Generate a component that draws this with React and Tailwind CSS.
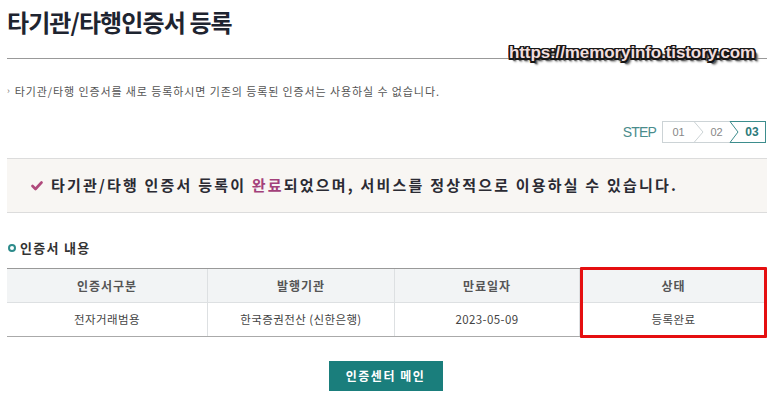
const KR = { fontFamily: '"Noto Sans CJK KR", "Liberation Sans", sans-serif' };

const StepBox = () => (
    <div className="flex items-center h-[22px] text-[11px]" style={{ fontFamily: '"Liberation Sans", sans-serif' }}>
        <div className="h-full w-[32px] flex items-center justify-center border-y border-l border-[#ccd3d6] text-[#888]">01</div>
        <svg width="10" height="22" viewBox="0 0 10 22" className="block">
            <line x1="0" y1="0.5" x2="10" y2="0.5" stroke="#ccd3d6" />
            <line x1="0" y1="21.5" x2="10" y2="21.5" stroke="#ccd3d6" />
            <polyline points="0,0.5 9,11 0,21.5" fill="none" stroke="#ccd3d6" />
        </svg>
        <div className="h-full w-[25px] flex items-center justify-center border-y border-[#ccd3d6] text-[#888]">02</div>
        <svg width="10" height="22" viewBox="0 0 10 22" className="block">
            <line x1="0" y1="0.5" x2="10" y2="0.5" stroke="#ccd3d6" />
            <line x1="0" y1="21.5" x2="10" y2="21.5" stroke="#ccd3d6" />
            <line x1="1" y1="0.5" x2="10" y2="0.5" stroke="#3d8d8d" />
            <line x1="1" y1="21.5" x2="10" y2="21.5" stroke="#3d8d8d" />
            <polyline points="1,0.5 9,11 1,21.5" fill="none" stroke="#3d8d8d" />
        </svg>
        <div className="h-full w-[27px] flex items-center justify-center border-y border-r border-[#3d8d8d] text-[#2c7a7a] font-bold text-[12px]">03</div>
    </div>
);

const App = () => {
    const cols = [
        { head: '인증서구분', body: '전자거래범용', w: 'w-[201px]' },
        { head: '발행기관', body: '한국증권전산 (신한은행)', w: 'w-[187px]' },
        { head: '만료일자', body: '2023-05-09', w: 'w-[185px]' },
        { head: '상태', body: '등록완료', w: 'flex-1' },
    ];

    return (
        <div className="w-[777px] h-[401px] bg-white overflow-hidden" style={KR}>
            <div className="ml-[7px] w-[760px] flex flex-col">
                {/* Title */}
                <div className="relative pt-[5px] h-[59px] border-b border-[#999]">
                    <h1 className="text-[24px] leading-[34px] font-bold text-[#1e2430] tracking-[-0.9px]">타기관/타행인증서 등록</h1>
                    <div
                        className="absolute left-[502px] top-[40px] text-[17px] font-bold text-[#f1dede] tracking-[-0.1px]"
                        style={{
                            fontFamily: '"Liberation Sans", sans-serif',
                            textShadow:
                                '1.5px 0 0 #161616, -1.5px 0 0 #161616, 0 1.5px 0 #161616, 0 -1.5px 0 #161616, 1.5px 1.5px 0 #161616, -1.5px -1.5px 0 #161616, 1.5px -1.5px 0 #161616, -1.5px 1.5px 0 #161616, 3px 3px 1px #555, 4px 4px 2px #999',
                        }}
                    >
                        https://memoryinfo.tistory.com
                    </div>
                </div>

                {/* Notice */}
                <div className="mt-[24px] flex items-center gap-[5px] text-[11px] leading-[16px] text-[#555]">
                    <span className="text-[9px] text-[#777]">›</span>
                    <span className="tracking-[0.9px]">타기관/타행 인증서를 새로 등록하시면 기존의 등록된 인증서는 사용하실 수 없습니다.</span>
                </div>

                {/* Step */}
                <div className="mt-[22px] flex justify-end items-center gap-[6px] pr-[1px]">
                    <span className="text-[14px] text-[#4a8c8c] tracking-[-0.8px]" style={{ fontFamily: '"Liberation Sans", sans-serif' }}>STEP</span>
                    <StepBox />
                </div>

                {/* Complete message */}
                <div className="mt-[15px] h-[55px] bg-[#f8f6f3] border-y border-[#dcdcdc] flex items-center pl-[24px] gap-[8px]">
                    <svg width="12" height="10" viewBox="0 0 12 10">
                        <polyline points="1.5,5 4.5,8 10.5,1.5" fill="none" stroke="#b04a7c" strokeWidth="2.6" strokeLinecap="round" strokeLinejoin="round" />
                    </svg>
                    <span className="text-[15px] font-bold text-[#2b2b33] tracking-[2.2px]">
                        타기관/타행 인증서 등록이 <span className="text-[#a3407a]">완료</span>되었으며, 서비스를 정상적으로 이용하실 수 있습니다.
                    </span>
                </div>

                {/* Section heading */}
                <div className="mt-[27px] flex items-center gap-[4px]">
                    <span className="ml-[1px] w-[8px] h-[8px] rounded-full border-2 border-[#2d8b8b]" />
                    <span className="text-[13px] leading-[16px] font-bold text-[#333] tracking-[1.3px]">인증서 내용</span>
                </div>

                {/* Table */}
                <div className="relative mt-[12px]">
                    <div className="border-t border-[#999] border-b border-b-[#aaa]">
                        <div className="flex h-[34px] bg-[#f2f4f5] border-b border-[#dde0e2]">
                            {cols.map((c, i) => (
                                <div
                                    key={c.head}
                                    className={`${c.w} flex items-center justify-center text-[12px] font-bold text-[#555] tracking-[1px] ${i < 3 ? 'border-r border-[#dde0e2]' : ''}`}
                                >
                                    {c.head}
                                </div>
                            ))}
                        </div>
                        <div className="flex h-[33px]">
                            {cols.map((c, i) => (
                                <div
                                    key={c.body}
                                    className={`${c.w} flex items-center justify-center text-[11.5px] text-[#444] tracking-[0.4px] ${i < 3 ? 'border-r border-[#dde0e2]' : ''}`}
                                >
                                    {c.body}
                                </div>
                            ))}
                        </div>
                    </div>
                    <div className="absolute left-[573px] top-[-1px] w-[187px] h-[71px] border-[3px] border-[#e50f10] rounded-[1px]" />
                </div>

                {/* Button */}
                <div className="mt-[24px] flex justify-center pr-[3px]">
                    <button className="w-[114px] h-[30px] bg-[#1a7e7c] text-white text-[12px] font-bold tracking-[1.5px]">
                        인증센터 메인
                    </button>
                </div>
            </div>
        </div>
    );
};

export default App;
